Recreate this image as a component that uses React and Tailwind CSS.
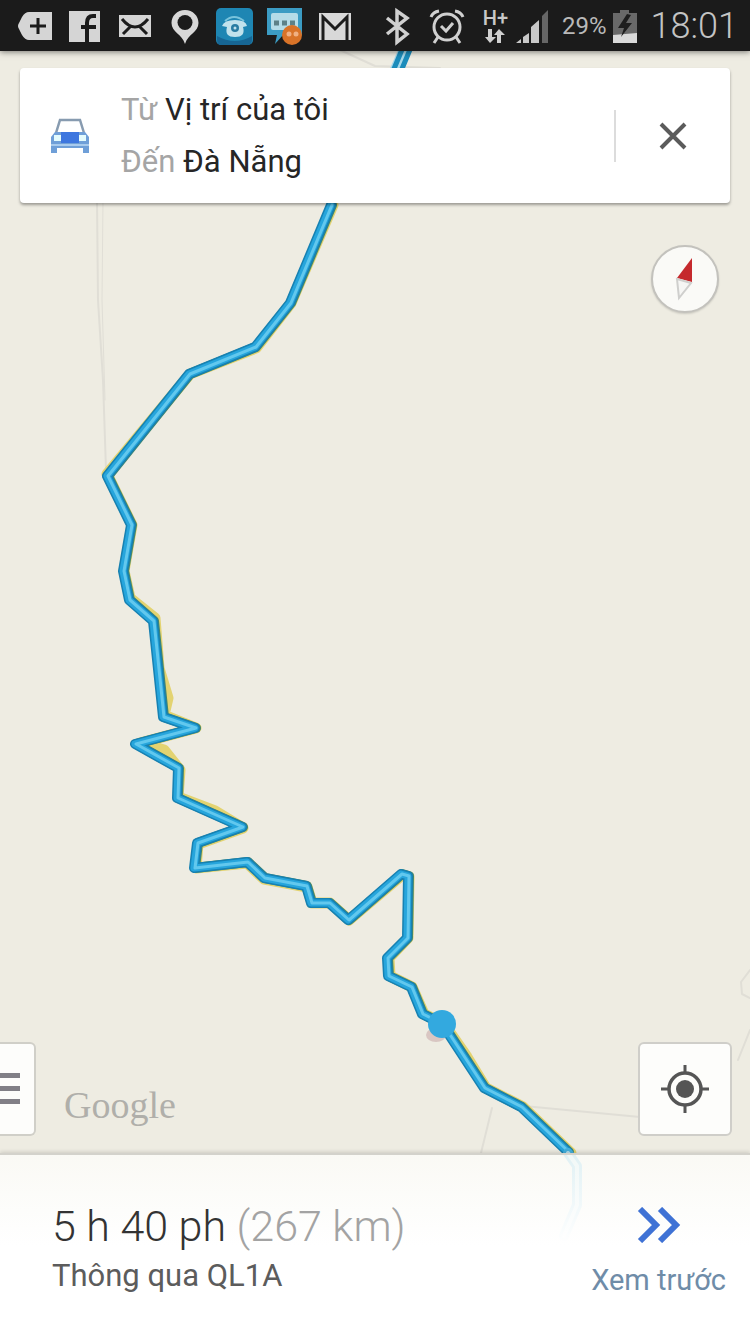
const ROUTE =
  'M331 205L290 303L255 347L189 374L107 476L131 525L123 571L129 600L153 621L163 717L195 728L135 744L178 768L177 798L242 827L197 843L194 868L247 862L264 878L306 886L311 903L329 903L348 920L401 874L408 876L407 938L387 958L388 976L411 987L422 1014L442 1024L484 1088L521 1107L568 1152';

const ROAD =
  'M333 205L291 303L256 348L190 374L107 474L132 525L124 571L130 598L155 618L159 668L168 698L164 715L196 728L140 743L164 750L180 770L178 797L215 811L243 828L198 844L196 868L247 863L264 879L307 887L312 903L330 903L349 920L402 875L409 877L408 938L389 958L390 976L412 987L424 1014L444 1024L467 1057L486 1088L523 1107L571 1153';

const MapCanvas = () => (
  <svg
    className="absolute inset-0 h-full w-full"
    viewBox="0 0 750 1336"
    preserveAspectRatio="xMidYMid slice"
    fill="none"
    strokeLinejoin="round"
    strokeLinecap="round"
    aria-hidden="true"
  >
    <rect width="750" height="1336" fill="#eeece2" />

    {/* minor roads */}
    <g stroke="#e0ded6" strokeWidth="2">
      <path d="M97 200L98 300L103 380L106 470" />
      <path d="M103 200L102 300L105 400" strokeWidth="1" />
      <path d="M524 1106L640 1117" />
      <path d="M492 1108L481 1153" />
      <path d="M750 970L741 982L742 994L750 998M750 1030L738 1060" />
      <path d="M340 50L375 66L440 68" />
    </g>

    {/* both lanes north of the search card */}
    <path d="M409 40L395 72" stroke="#a5d8ea" strokeWidth="12" />
    <path d="M406 40L391 76M414 40L399 76" stroke="#1b8cbb" strokeWidth="5" />

    <path d={ROAD} stroke="#e3d371" strokeWidth="11" />
    <path d={ROUTE} stroke="#43866f" strokeWidth="10" transform="translate(1 0)" />
    <path d={ROUTE} stroke="#1781b2" strokeWidth="10" />
    <path d={ROUTE} stroke="#26a5dc" strokeWidth="7" />
    <path d={ROUTE} stroke="#62c8ee" strokeWidth="3" transform="translate(1 0)" />
    <path d="M568 1153L577 1166L577 1205L564 1236" stroke="#45b0dc" strokeWidth="10" />
    <path d="M568 1153L577 1166L577 1205L564 1236" stroke="#b5e0ef" strokeWidth="4" />

    <ellipse cx="436" cy="1035" rx="10" ry="7" fill="#b98f93" opacity="0.4" />
    <circle cx="442" cy="1024" r="14" fill="#33a9df" />
  </svg>
);

const NotificationIcons = () => (
  <div className="flex items-center gap-[10px]">
    <svg className="h-10 w-10" viewBox="0 0 40 40">
      <path d="M14 6H37V34H14Q10 34 7 29L4 23Q2 20 4 17L7 11Q10 6 14 6Z" fill="#d5d5d5" />
      <path d="M23 12V28M15 20H31" stroke="#1b1b1b" strokeWidth="3" />
    </svg>
    <svg className="h-10 w-10" viewBox="0 0 40 40">
      <rect x="4" y="5" width="31" height="31" fill="#d5d5d5" />
      <path d="M31 10H28Q22 10 22 17V36M16 21H31" fill="none" stroke="#1b1b1b" strokeWidth="4" />
    </svg>
    <svg className="h-10 w-10" viewBox="0 0 40 40">
      <rect x="4" y="9" width="32" height="22" fill="#d5d5d5" />
      <path d="M7 13Q20 29 33 13M8 28L15 21M32 28L25 21" fill="none" stroke="#1b1b1b" strokeWidth="3" />
    </svg>
    <svg className="h-10 w-10" viewBox="0 0 40 40">
      <path d="M20 4C12 4 6.500 10 6.500 17C6.500 26 17 28 20 38C23 28 33.500 26 33.500 17C33.500 10 28 4 20 4Z" fill="#d8d8d8" />
      <circle cx="20" cy="16.500" r="7.500" fill="#1b1b1b" />
    </svg>
    <svg className="h-10 w-10" viewBox="0 0 40 40">
      <rect x="1" y="2" width="37" height="37" rx="5" fill="#1e86b3" />
      <path d="M2 30Q20 40 37 30V34Q37 39 32 39H6Q2 39 2 34Z" fill="#176694" />
      <path d="M10 15Q19 7 29 15" fill="none" stroke="#78c3dc" strokeWidth="2" />
      <path d="M7 20Q9 14 20 14Q31 14 32 20L28 21Q31 31 20 31Q9 31 12 21Z" fill="#c1e2ec" />
      <circle cx="20" cy="22" r="4" fill="#2a7ca2" />
      <circle cx="20" cy="22" r="1.500" fill="#c1e2ec" />
    </svg>
    <svg className="h-10 w-10" viewBox="0 0 40 40">
      <path d="M2 2H37V29H18L10 38L12 29H2Z" fill="#3b9cc4" />
      <rect x="6" y="7" width="27" height="17" rx="2" fill="#b5dce8" />
      <path d="M9 17H14M17 17H22M25 17H30" stroke="#5d8188" strokeWidth="5" />
      <circle cx="27" cy="29" r="10" fill="#d97328" />
      <circle cx="24" cy="28" r="2.500" fill="#f0b083" />
      <circle cx="31" cy="28" r="2.500" fill="#f0b083" />
    </svg>
    <svg className="h-10 w-10" viewBox="0 0 40 40">
      <rect x="4" y="7" width="32" height="27" fill="#d8d8d8" />
      <path d="M8 34V11L20 23L32 11V34" fill="none" stroke="#1b1b1b" strokeWidth="3" />
    </svg>
  </div>
);

const SystemIcons = () => (
  <div className="flex items-center gap-[14px]">
    <div className="flex items-center gap-[18px]">
      <svg className="h-10 w-7" viewBox="0 0 28 40" fill="none" stroke="#d0d0d0" strokeWidth="3.500">
        <path d="M4 12L24 28L14 36V5L24 12L4 28" />
      </svg>
      <svg className="h-10 w-9" viewBox="0 0 36 40" fill="none" stroke="#d0d0d0" strokeWidth="3">
        <circle cx="18" cy="21" r="13" />
        <path d="M12 20L17 25L24 17M2 11Q4 6 10 5M34 11Q32 6 26 5M9 31L5 37M27 31L31 37" />
      </svg>
      <div className="flex items-center gap-2">
        <div className="flex flex-col items-center">
          <span className="text-[20px] leading-5 font-medium text-[#c8c8c8]">H+</span>
          <svg className="h-4 w-5" viewBox="0 0 20 16" fill="#d0d0d0">
            <path d="M3 1H7V9H11L5 15L0 9H3ZM12 15H16V7H20L14 1L9 7H12Z" />
          </svg>
        </div>
        <svg className="h-10 w-8" viewBox="0 0 32 40" fill="#c8c8c8">
          <path d="M0 37L5 33V37ZM7 31L13 27V37H7ZM15 21L23 14V37H15Z" />
          <path d="M26 10L32 4V37H26Z" fill="#666" />
        </svg>
      </div>
    </div>
    <div className="flex items-center gap-[6px]">
      <span className="text-[24px] leading-8 text-[#b9b9b9]">29%</span>
      <svg className="h-10 w-6" viewBox="0 0 24 40">
        <path d="M0 7H7V4H16V7H24V37H0Z" fill="#696969" />
        <path d="M0 29L24 27V37H0Z" fill="#dadada" />
        <path d="M14 8L5 22H11L8 31L19 17H13L18 9Z" fill="#1e1e1e" />
      </svg>
    </div>
    <time className="text-[36px] leading-10 font-light text-[#c4c4c4]">18:01</time>
  </div>
);

const StatusBar = () => (
  <header className="relative flex h-[51px] items-center justify-between bg-[#1b1b1b] pr-3 pl-[15px] shadow-[0_1px_6px_rgba(0,0,0,0.5)]">
    <NotificationIcons />
    <SystemIcons />
  </header>
);

const CarIcon = () => (
  <svg className="h-9 w-10" viewBox="0 0 40 36">
    <path d="M6 15L10 2H30L34 15" fill="none" stroke="#879bb0" strokeWidth="2.500" />
    <path d="M5 14H35L39 19V35H33V30H7V35H1V19Z" fill="#6f9fd8" />
    <path d="M11 14H29V25H11Z" fill="#3d76df" />
    <path d="M4 17H11V23H4ZM29 17H36V23H29Z" fill="#e4fbfd" />
    <path d="M1 27H39" stroke="#a9cbed" strokeWidth="2" />
  </svg>
);

const DirectionsCard = () => (
  <section className="mx-5 mt-[17px] flex h-[135px] items-center rounded-sm bg-white pl-[30px] shadow-[0_2px_3px_rgba(0,0,0,0.35)]">
    <CarIcon />
    <div className="ml-[31px] flex-1 text-[31px] leading-[52px] text-[#262626]">
      <p>
        <span className="text-[#a5a5a5]">Từ</span> Vị trí của tôi
      </p>
      <p>
        <span className="text-[#a5a5a5]">Đến</span> Đà Nẵng
      </p>
    </div>
    <div className="h-[52px] w-[2px] bg-[#dcdcdc]" />
    <button type="button" aria-label="Đóng" className="flex h-full w-[114px] items-center justify-center">
      <svg className="h-7 w-7" viewBox="0 0 28 28" stroke="#5b5b5b" strokeWidth="4">
        <path d="M2 2L26 26M26 2L2 26" />
      </svg>
    </button>
  </section>
);

const Compass = () => (
  <button
    type="button"
    aria-label="La bàn"
    className="mt-[42px] mr-[31px] flex h-[68px] w-[68px] items-center justify-center self-end rounded-full border-2 border-[#c3c2bd] bg-[#fafaf7] shadow-[0_1px_2px_rgba(0,0,0,0.15)]"
  >
    <svg className="h-11 w-6" viewBox="0 0 24 44">
      <path d="M19 1L19 25L4 21Z" fill="#c5292d" />
      <path d="M4 22L18 26L6 41Z" fill="#f6f6f4" stroke="#cfcfcd" strokeWidth="2" />
    </svg>
  </button>
);

const MapControls = () => (
  <div className="mt-auto mb-[17px] flex items-end">
    <button
      type="button"
      aria-label="Menu"
      className="flex h-[94px] w-9 items-center rounded-r-md border-2 border-l-0 border-[#d0cfc8] bg-[#fdfdfb]"
    >
      <svg className="h-8 w-5" viewBox="0 0 20 32" fill="#817f86">
        <path d="M0 0H20V5H0ZM0 13H20V18H0ZM0 26H20V31H0Z" />
      </svg>
    </button>
    <span className="mb-2 ml-7 font-['Liberation_Serif',serif] text-[38px] leading-[46px] text-[#b0afaa]">Google</span>
    <button
      type="button"
      aria-label="Vị trí của tôi"
      className="mr-[18px] ml-auto flex h-[94px] w-[94px] items-center justify-center rounded-md border-2 border-[#cfcec9] bg-[#fdfdfb]"
    >
      <svg className="h-12 w-12" viewBox="0 0 48 48" fill="none" stroke="#555">
        <circle cx="24" cy="24" r="16" strokeWidth="3.500" />
        <circle cx="24" cy="24" r="9" fill="#555" stroke="none" />
        <path d="M24 0V8M24 40V48M0 24H8M40 24H48" strokeWidth="3" />
      </svg>
    </button>
  </div>
);

const RouteSummary = () => (
  <footer className="relative flex h-[183px] items-start justify-between border-t-2 border-[#d3d2cb] bg-linear-to-b from-[#fcfcf8]/85 to-white to-50% pr-6 pl-[52px] shadow-[0_-1px_4px_rgba(0,0,0,0.15)]">
    <div className="pt-11">
      <p className="text-[43px] leading-[54px] font-light text-[#333]">
        5 h 40 ph <span className="text-[#a3a3a3]">(267 km)</span>
      </p>
      <p className="text-[31px] leading-[46px] text-[#5c5c5c]">Thông qua QL1A</p>
    </div>
    <button type="button" className="flex flex-col items-center pt-[52px] text-[29px] leading-9 text-[#6f8ca8]">
      <svg className="mb-[19px] h-9 w-11" viewBox="0 0 44 36" fill="none" stroke="#3f72d5" strokeWidth="6">
        <path d="M3 2L19 18L3 34M23 2L39 18L23 34" />
      </svg>
      Xem trước
    </button>
  </footer>
);

const App = () => (
  <div className="relative flex min-h-screen flex-col overflow-hidden bg-[#eeece2] font-['Roboto','Noto_Sans',sans-serif]">
    <MapCanvas />
    <StatusBar />
    <main className="relative flex flex-1 flex-col">
      <DirectionsCard />
      <Compass />
      <MapControls />
    </main>
    <RouteSummary />
  </div>
);

export default App;
